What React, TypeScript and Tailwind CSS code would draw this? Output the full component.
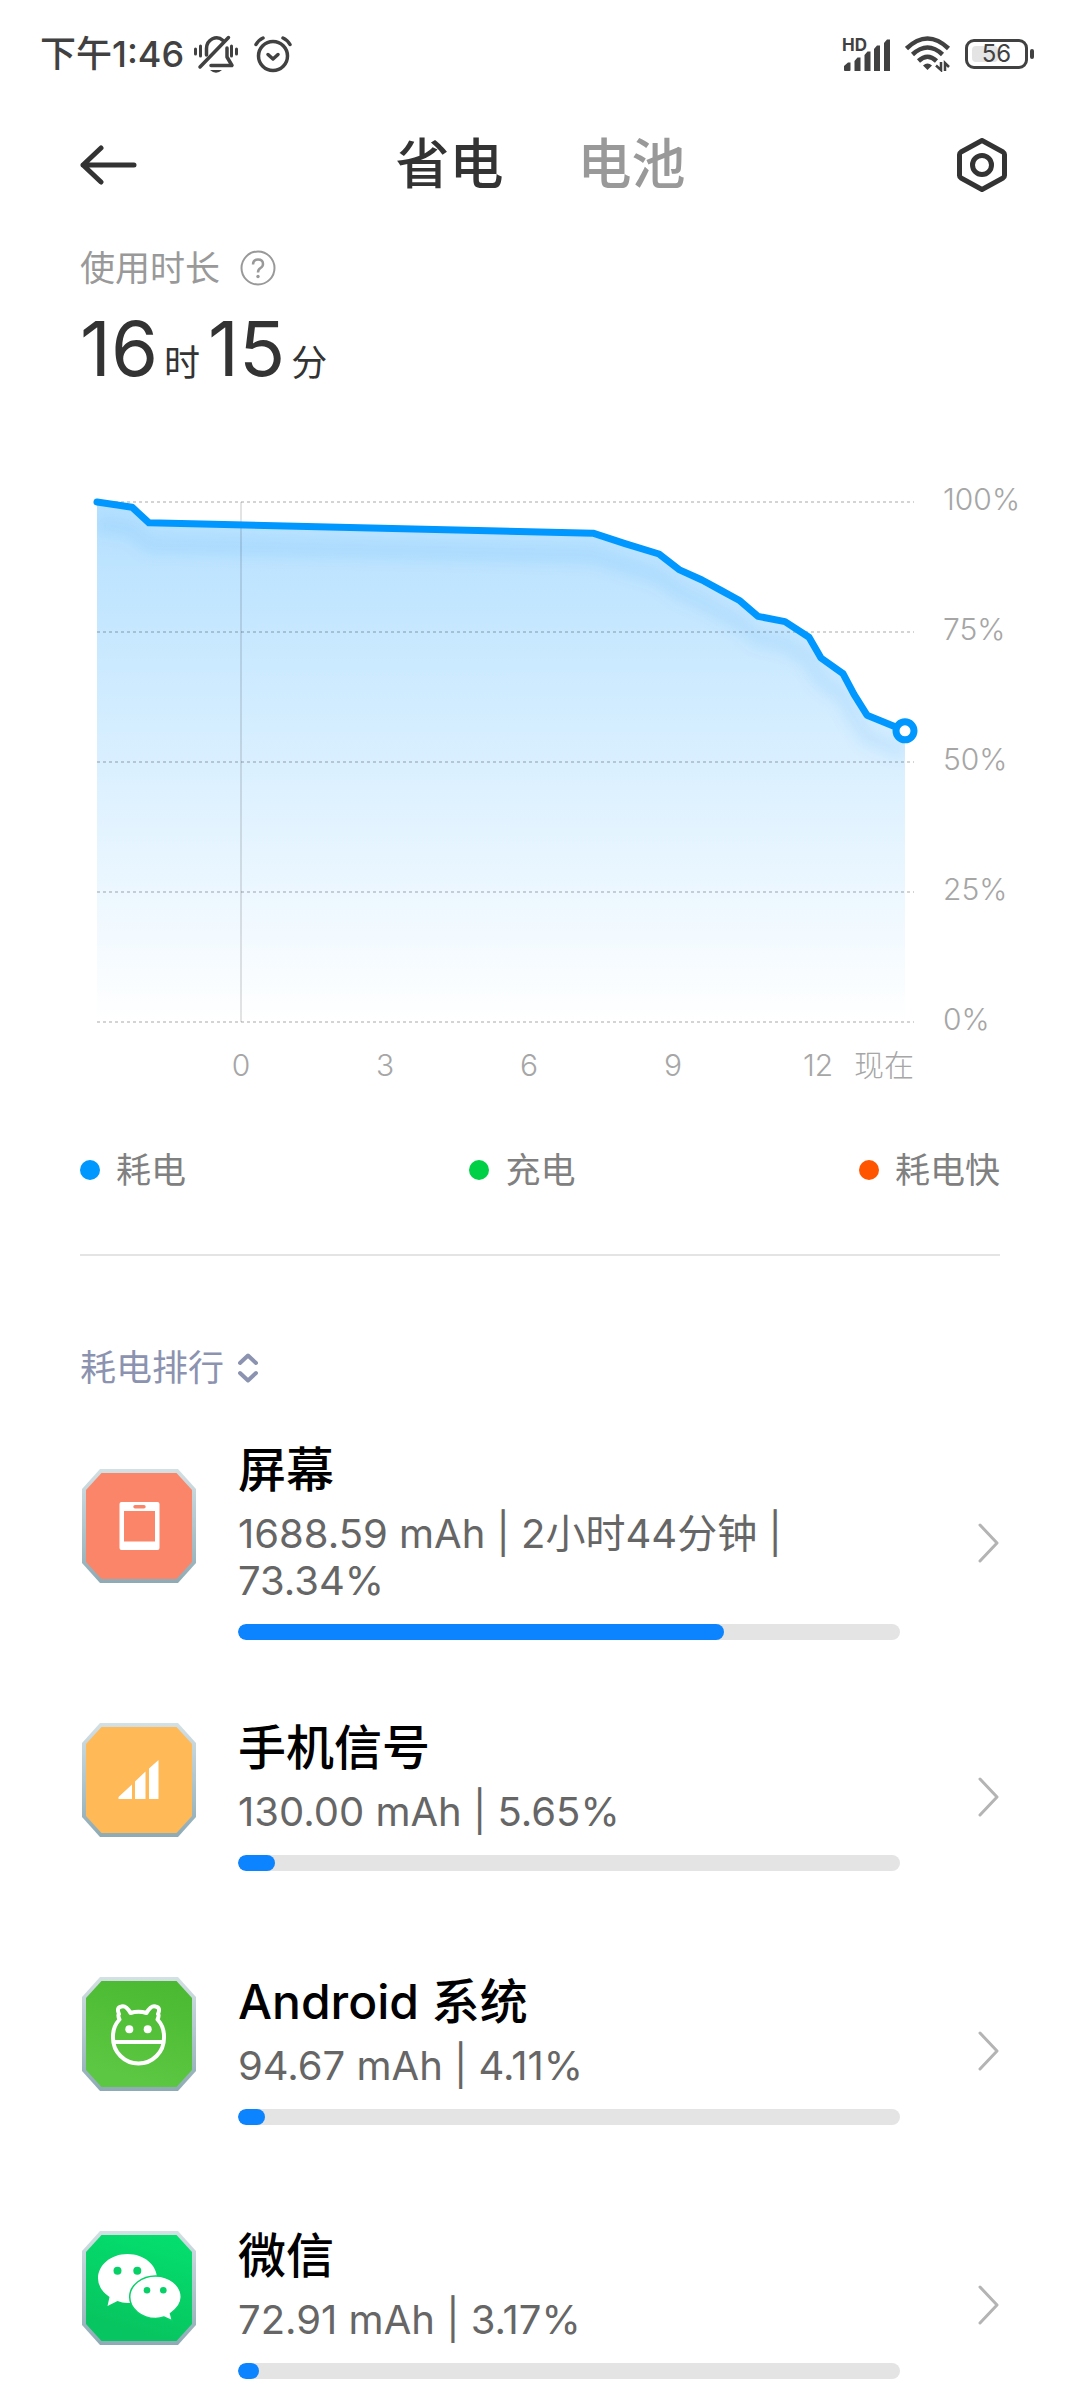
import React, { useState } from 'react';

type Tab = 'saver' | 'battery';

interface UsageItem {
  id: string;
  name: string;
  detail: string;
  percent: number;
  icon: React.ReactNode;
}

// x position on the chart, battery level in percent
const LEVELS: [number, number][] = [
  [17, 100], [52, 99], [69, 96], [513, 94], [545, 92], [579, 90], [599, 87], [622, 85], [641, 83],
  [660, 81], [678, 78], [705, 77], [729, 74], [741, 70], [763, 67], [774, 63], [787, 59], [825, 56],
];

const HOURS = [
  { label: '0', x: 161 },
  { label: '3', x: 305 },
  { label: '6', x: 449 },
  { label: '9', x: 593 },
  { label: '12', x: 738 },
];

const LEGEND = [
  { label: '耗电', color: 'bg-[#0097ff]' },
  { label: '充电', color: 'bg-[#00d046]' },
  { label: '耗电快', color: 'bg-[#ff5500]' },
];

const levelY = (level: number) => 32 + (100 - level) * 5.2;

function StatusBar() {
  return (
    <div className="flex h-27 items-center justify-between pl-10 pr-[46px] text-[#414141]">
      <div className="flex items-center">
        <span className="text-[36px] leading-10 font-medium">下午1:46</span>
        <svg width="44" height="38" viewBox="0 0 44 38" className="ml-2.5" fill="none" stroke="currentColor" strokeLinecap="round" strokeLinejoin="round">
          <path d="M1.5 14v5M6.5 11v10M37.500 11v10M42.500 14v5" strokeWidth="3" />
          <path d="M12.500 20v-6.500A10 11 0 0 1 29 5.500" strokeWidth="3.500" />
          <path d="M33 13v9l5 8.500H17" strokeWidth="3.500" />
          <path d="M34.500 2.500 6 32" strokeWidth="3.500" />
          <path d="M16 35h12q-6 5.500-12 0Z" fill="currentColor" stroke="none" />
        </svg>
        <svg width="38" height="37" viewBox="0 0 38 37" className="ml-4" fill="none" stroke="currentColor" strokeLinecap="round" strokeLinejoin="round">
          <circle cx="19" cy="20" r="14.500" strokeWidth="3.500" />
          <path d="M14 18.500l5 4.500 5-4.500" strokeWidth="3.500" />
          <path d="M2 8.500Q4.500 4 9 2M36 8.500Q33.500 4 29 2" strokeWidth="3.500" />
        </svg>
      </div>
      <div className="flex items-center">
        <svg width="50" height="43" viewBox="-1 -4 50 43" fill="currentColor">
          <text x="0" y="14" fontSize="17" fontWeight="700">HD</text>
          <path d="M2 33v-4l4-3.500h2.500V33q0 1-1 1H3q-1 0-1-1ZM12.500 34V24l3-3.500h3V34ZM22.500 34V18l3-3.500h3V34ZM32 34V12l3-3.500h3V34ZM42 34V6l3-3.500h3V34Z" />
        </svg>
        <svg width="46" height="36" viewBox="0 0 46 36" className="ml-3.5" fill="none" stroke="currentColor">
          <path d="M1.500 12.500Q22.500-7.500 43.500 12.500" strokeWidth="4.500" />
          <path d="M7.500 18.500Q22.500 4.500 37.500 18.500" strokeWidth="4.500" />
          <path d="M13.500 25Q22.500 16.500 31.500 25" strokeWidth="4.500" />
          <path d="M18 29.500q4.500-4 9 0L22.500 34Z" fill="currentColor" stroke="none" />
          <path d="M36 26v8l-5-4.500M40 35v-8l4 4" strokeWidth="2.500" />
        </svg>
        <div className="ml-3.5 flex items-center gap-0.5">
          <div className="relative flex h-[30px] w-[63px] items-center justify-center rounded-[9px] border-3 border-current">
            <div className="absolute inset-y-1 left-1 w-[26px] rounded-sm bg-[#e4e4e4]" />
            <span className="relative text-[24px] leading-6">56</span>
          </div>
          <div className="h-2.5 w-1 rounded-full bg-current" />
        </div>
      </div>
    </div>
  );
}

function Header({ tab, onChange }: { tab: Tab; onChange: (tab: Tab) => void }) {
  const tabClass = (value: Tab) => `cursor-pointer ${tab === value ? 'text-[#333]' : 'text-[#999]'}`;

  return (
    <header className="flex h-[114px] items-center justify-between pl-20 pr-[73px] text-[#333]">
      <button aria-label="返回" className="cursor-pointer">
        <svg width="58" height="42" viewBox="0 0 58 42" fill="none" stroke="currentColor" strokeWidth="5" strokeLinecap="round" strokeLinejoin="round">
          <path d="M54 21H3M21 4 3 21l18 17" />
        </svg>
      </button>
      <nav className="flex gap-[74px] text-[54px] leading-[64px] font-medium">
        <button className={tabClass('saver')} onClick={() => onChange('saver')}>省电</button>
        <button className={tabClass('battery')} onClick={() => onChange('battery')}>电池</button>
      </nav>
      <button aria-label="设置" className="flex w-16 cursor-pointer justify-end">
        <svg width="50" height="54" viewBox="0 0 50 54" fill="none" stroke="currentColor" strokeWidth="5" strokeLinejoin="round">
          <path d="M25 2.500 46 14q1.500 1 1.500 2.500v21q0 1.500-1.500 2.500L25 51.500 4 40q-1.500-1-1.500-2.500v-21q0-1.500 1.500-2.500Z" />
          <circle cx="25" cy="27" r="9.500" />
        </svg>
      </button>
    </header>
  );
}

function LevelChart() {
  const line = LEVELS.map(([x, level]) => `${x},${levelY(level)}`).join(' ');
  const [lastX, lastLevel] = LEVELS[LEVELS.length - 1];

  return (
    <svg viewBox="0 0 940 620" className="h-auto w-full" role="img" aria-label="电量曲线">
      <defs>
        <linearGradient id="level-fill" gradientUnits="userSpaceOnUse" x1="0" y1="32" x2="0" y2="552">
          <stop offset="0" stopColor="#b4e0ff" />
          <stop offset="1" stopColor="#fff" />
        </linearGradient>
        <filter id="line-shadow" x="-5%" y="-20%" width="110%" height="150%">
          <feGaussianBlur stdDeviation="7" />
        </filter>
        <clipPath id="level-clip">
          <polygon points={`17,552 ${line} ${lastX},552`} />
        </clipPath>
      </defs>

      <polygon points={`17,552 ${line} ${lastX},552`} fill="url(#level-fill)" />
      <g clipPath="url(#level-clip)">
        <polyline points={line} transform="translate(0 22)" fill="none" stroke="#0080e8" strokeOpacity="0.09" strokeWidth="16" filter="url(#line-shadow)" />
      </g>

      {/* Grid */}
      {[100, 75, 50, 25, 0].map((level) => (
        <g key={level}>
          <path d={`M17 ${levelY(level)}H834`} stroke="#000" strokeOpacity="0.17" strokeWidth="2" strokeDasharray="3 3" />
          <text x="863" y={levelY(level) + 8} fontSize="30" fontWeight="300" fill="#a6a6a6">{level}%</text>
        </g>
      ))}
      <path d="M161 32V552" stroke="#000" strokeOpacity="0.11" strokeWidth="2" />

      {/* Level line */}
      <polyline points={line} fill="none" stroke="#0097ff" strokeWidth="7" strokeLinecap="round" strokeLinejoin="round" />
      <circle cx={lastX} cy={levelY(lastLevel)} r="9" fill="#fff" stroke="#0097ff" strokeWidth="7" />

      {/* Hours */}
      {HOURS.map(({ label, x }) => (
        <text key={label} x={x} y="606" textAnchor="middle" fontSize="30" fontWeight="300" fill="#a6a6a6">{label}</text>
      ))}
      <text x="834" y="606" textAnchor="end" fontSize="30" fontWeight="300" fill="#a6a6a6">现在</text>
    </svg>
  );
}

function AppIcon({ id, from, to, children }: { id: string; from: string; to: string; children: React.ReactNode }) {
  return (
    <svg width="118" height="114" viewBox="-2 0 118 114" className="flex-shrink-0">
      <defs>
        <linearGradient id={`${id}-edge`} x1="0" y1="0" x2="0" y2="1">
          <stop offset="0" stopColor="#d3e0e4" />
          <stop offset="1" stopColor="#8eabb5" />
        </linearGradient>
        <linearGradient id={`${id}-fill`} x1="1" y1="0" x2="0.700" y2="1">
          <stop offset="0" stopColor={from} />
          <stop offset="1" stopColor={to} />
        </linearGradient>
      </defs>
      <path d="M18 0H96L114 20V94L96 114H18L0 94V20Z" fill={`url(#${id}-edge)`} />
      <path d="M19.500 4H94.500L110 21V93L94.500 110H19.500L4 93V21Z" fill={`url(#${id}-fill)`} />
      {children}
    </svg>
  );
}

const ITEMS: UsageItem[] = [
  {
    id: 'screen',
    name: '屏幕',
    detail: '1688.59 mAh | 2小时44分钟 | 73.34%',
    percent: 73.34,
    icon: (
      <AppIcon id="screen" from="#fa8569" to="#fa8569">
        <path fillRule="evenodd" fill="#fff" d="M39.500 33h36q2 0 2 2v44q0 2-2 2h-36q-2 0-2-2V35q0-2 2-2ZM42 42v30.500h31V42ZM53 36q-1.700 0-1.700 1.700t1.700 1.700h9q1.700 0 1.700-1.700T62 36Z" />
      </AppIcon>
    ),
  },
  {
    id: 'signal',
    name: '手机信号',
    detail: '130.00 mAh | 5.65%',
    percent: 5.65,
    icon: (
      <AppIcon id="signal" from="#ffb957" to="#ffb957">
        <path fill="#fff" d="M36.500 76V74L50 61.500V76ZM53 76V58.500L63.500 48.500V76ZM67 76V45.500L76.500 37V76Z" />
      </AppIcon>
    ),
  },
  {
    id: 'android',
    name: 'Android 系统',
    detail: '94.67 mAh | 4.11%',
    percent: 4.11,
    icon: (
      <AppIcon id="android" from="#4ab830" to="#5cc742">
        <g fill="none" stroke="#fff" strokeWidth="4" strokeLinejoin="round">
          <path d="M37.500 42.500Q35.500 38 37 37Q34 30.500 39.500 29.500Q44 28 48.500 36Q56.500 33.500 64.500 36Q69 28 73.500 29.500Q79 30.500 76 37Q77.500 38 75.500 42.500Q82.500 50 82 61A25.500 25.500 0 0 1 31 61Q30.500 50 37.500 42.500Z" />
          <path d="M32 65H81" />
        </g>
        <circle cx="47.300" cy="52.300" r="4" fill="#fff" />
        <circle cx="65.700" cy="52.300" r="4" fill="#fff" />
      </AppIcon>
    ),
  },
  {
    id: 'wechat',
    name: '微信',
    detail: '72.91 mAh | 3.17%',
    percent: 3.17,
    icon: (
      <AppIcon id="wechat" from="#04e06f" to="#07c560">
        <path fill="#fff" d="M45.500 23C62 23 75 34 75 47.500S62 72 45.500 72Q40 72 35.500 70L25.500 75L27.500 66Q16 58 16 47.500C16 34 29 23 45.500 23Z" />
        <path fill="#fff" stroke="#06d167" strokeWidth="1.500" d="M73.500 45C60 45 47.700 54 47.700 66S60 87.500 73.500 87.500Q78 87.500 82 86L90.500 90L88.500 82.500Q99.300 75 99.300 66C99.300 54 87 45 73.500 45Z" />
        <g fill="#06d167">
          <circle cx="35.500" cy="39.700" r="4" />
          <circle cx="55.300" cy="39.700" r="4" />
          <circle cx="65" cy="59.300" r="3.300" />
          <circle cx="81.300" cy="59.300" r="3.300" />
        </g>
      </AppIcon>
    ),
  },
];

function UsageRow({ item }: { item: UsageItem }) {
  return (
    <li>
      <button className="flex h-[254px] w-full cursor-pointer items-center px-20 text-left">
        <div className="pb-[34px]">{item.icon}</div>
        <div className="ml-10 flex-1 pb-2">
          <div className="text-[48px] leading-[64px] font-medium text-black">{item.name}</div>
          <div className="mt-2 text-[40px] leading-[47px] text-[#666]">{item.detail}</div>
          <div className="mt-5 h-4 overflow-hidden rounded-full bg-[#e4e4e4]">
            <div className="h-full rounded-full bg-[#0d84ff]" style={{ width: `${item.percent}%` }} />
          </div>
        </div>
        <svg width="22" height="40" viewBox="0 0 22 40" className="ml-[78px] flex-shrink-0" fill="none" stroke="#b4b4b4" strokeWidth="3" strokeLinecap="round" strokeLinejoin="round">
          <path d="M2 2 19 20 2 38" />
        </svg>
      </button>
    </li>
  );
}

export default function App() {
  const [tab, setTab] = useState<Tab>('saver');

  return (
    <div lang="zh-CN" className="h-screen overflow-hidden bg-white font-[Inter,'Noto_Sans_CJK_SC',sans-serif]">
      <StatusBar />
      <Header tab={tab} onChange={setTab} />

      <main>
        {/* Usage time */}
        <section className="px-20 pt-[22px]">
          <div className="flex items-center gap-5 text-[#999]">
            <h2 className="text-[35px] leading-[48px]">使用时长</h2>
            <button aria-label="说明" className="cursor-pointer">
              <svg width="36" height="36" viewBox="0 0 36 36" fill="none" stroke="currentColor">
                <circle cx="18" cy="18" r="16.500" strokeWidth="2" />
                <path d="M13 14.500q0-5 5-5t5 4.500q0 2.500-2.500 4T18 22.500" strokeWidth="2.500" />
                <circle cx="18" cy="26.500" r="1.700" fill="currentColor" stroke="none" />
              </svg>
            </button>
          </div>
          <div className="mt-3 flex items-baseline text-[#333]">
            <span className="text-[76px] leading-[88px]">16</span>
            <span className="ml-1.5 text-[36px]">时</span>
            <span className="ml-2 text-[76px] leading-[88px]">15</span>
            <span className="ml-1.5 text-[36px]">分</span>
          </div>
        </section>

        {/* Chart */}
        <section className="pt-[78px] pr-15 pl-20">
          <LevelChart />
          <ul className="mr-5 mt-14 flex justify-between text-[35px] leading-[48px] text-[#808080]">
            {LEGEND.map(({ label, color }) => (
              <li key={label} className="flex items-center gap-4">
                <span className={`size-5 rounded-full ${color}`} />
                {label}
              </li>
            ))}
          </ul>
        </section>
        <hr className="mx-20 mt-[60px] border-t-2 border-[#e4e4e4]" />

        {/* Ranking */}
        <section className="pt-[88px]">
          <button className="ml-20 flex cursor-pointer items-center gap-[14px] text-[36px] leading-[48px] text-[#8c93b0]">
            耗电排行
            <svg width="20" height="30" viewBox="0 0 20 30" fill="none" stroke="currentColor" strokeWidth="4" strokeLinecap="round" strokeLinejoin="round">
              <path d="M2 10 10 2.500 18 10M2 20l8 7.500L18 20" />
            </svg>
          </button>
          <ul className="mt-6">
            {ITEMS.map((item) => (
              <UsageRow key={item.id} item={item} />
            ))}
          </ul>
        </section>
      </main>
    </div>
  );
}
